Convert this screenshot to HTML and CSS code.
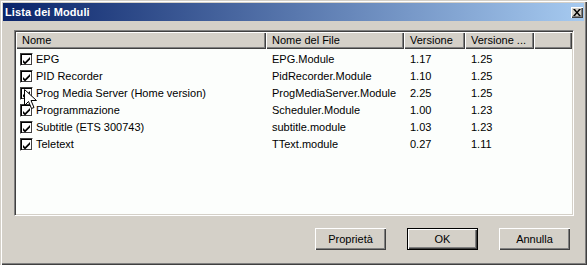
FILE: index.html
```html
<!doctype html>
<html lang="it">
	<head>
		<meta charset="UTF-8">
		<title>Lista dei Moduli</title>
		<link rel="stylesheet" href="styles.css">
	</head>
	<body>
		<div class="window">
			<div class="titlebar">
				<span class="title">Lista dei Moduli</span>
				<span class="close">
					<svg width="8" height="7" viewBox="0 0 8 7"><path d="M0 0h2l2 2.5L6 0h2L5 3.5 8 7H6L4 4.5 2 7H0l3-3.5z" fill="#000"/></svg>
				</span>
			</div>
			<div class="content">
				<div class="list">
					<div class="head">
						<div class="hcell">Nome</div>
						<div class="hcell">Nome del File</div>
						<div class="hcell">Versione</div>
						<div class="hcell">Versione ...</div>
						<div class="hcell"></div>
					</div>
					<div class="rows">
						<div class="row"><div class="cell name"><i class="chk"><svg width="9" height="9" viewBox="0 0 9 9"><path d="M1 4l2 2 5-5v2.5l-5 5-2-2z" fill="#000"/></svg></i>EPG</div><div class="cell">EPG.Module</div><div class="cell">1.17</div><div class="cell">1.25</div></div>
						<div class="row"><div class="cell name"><i class="chk"><svg width="9" height="9" viewBox="0 0 9 9"><path d="M1 4l2 2 5-5v2.5l-5 5-2-2z" fill="#000"/></svg></i>PID Recorder</div><div class="cell">PidRecorder.Module</div><div class="cell">1.10</div><div class="cell">1.25</div></div>
						<div class="row"><div class="cell name"><i class="chk"><svg width="9" height="9" viewBox="0 0 9 9"><path d="M1 4l2 2 5-5v2.5l-5 5-2-2z" fill="#000"/></svg></i>Prog Media Server (Home version)</div><div class="cell">ProgMediaServer.Module</div><div class="cell">2.25</div><div class="cell">1.25</div></div>
						<div class="row"><div class="cell name"><i class="chk"><svg width="9" height="9" viewBox="0 0 9 9"><path d="M1 4l2 2 5-5v2.5l-5 5-2-2z" fill="#000"/></svg></i>Programmazione</div><div class="cell">Scheduler.Module</div><div class="cell">1.00</div><div class="cell">1.23</div></div>
						<div class="row"><div class="cell name"><i class="chk"><svg width="9" height="9" viewBox="0 0 9 9"><path d="M1 4l2 2 5-5v2.5l-5 5-2-2z" fill="#000"/></svg></i>Subtitle (ETS 300743)</div><div class="cell">subtitle.module</div><div class="cell">1.03</div><div class="cell">1.23</div></div>
						<div class="row"><div class="cell name"><i class="chk"><svg width="9" height="9" viewBox="0 0 9 9"><path d="M1 4l2 2 5-5v2.5l-5 5-2-2z" fill="#000"/></svg></i>Teletext</div><div class="cell">TText.module</div><div class="cell">0.27</div><div class="cell">1.11</div></div>
					</div>
				</div>
				<div class="buttons">
					<button class="btn">Proprietà</button>
					<button class="btn default">OK</button>
					<button class="btn">Annulla</button>
				</div>
			</div>
			<!-- puntatore del mouse sopra la lista -->
			<svg class="cursor" width="13" height="21" viewBox="0 0 13 21"><path d="M0.5 0.5v16l4-4 3 7 2.5-1-3-7h5.5z" fill="#fff" stroke="#000" stroke-width="1"/></svg>
		</div>
	</body>
</html>
```

FILE: styles.css
```css
body{margin:0; background:#d4d0c8; font-family:"Liberation Sans", Arial, sans-serif; font-size:11px; color:#000;}
.window{position:relative; width:587px; height:265px; box-sizing:border-box; padding:3px; background:#d4d0c8;
	box-shadow:inset 1px 1px 0 #d4d0c8, inset 2px 2px 0 #fff, inset -1px -1px 0 #404040, inset -2px -2px 0 #808080;}
.titlebar{height:18px; display:flex; align-items:center; justify-content:space-between; padding:0 1px 0 2px;
	background:linear-gradient(to right, #0a246a, #a6caf0);}
.title{color:#fff; font-weight:bold; font-size:11px; letter-spacing:0.1px;}
.close{width:12px; height:11px; box-sizing:border-box; display:flex; align-items:center; justify-content:center; background:#d4d0c8;
	box-shadow:inset 1px 1px 0 #fff, inset -1px -1px 0 #404040, inset -2px -2px 0 #808080;}
.content{padding:9px 10px 0 11px;}
.list{height:186px; box-sizing:border-box; background:#fcfefc; border:1px solid; border-color:#808080 #fff #fff #808080;
	box-shadow:inset 1px 1px 0 #404040, inset -1px -1px 0 #d4d0c8; padding:1px;}
.head,.row{display:grid; grid-template-columns:250px 138px 61px 69px 1fr;}
.hcell{height:17px; box-sizing:border-box; padding:1px 0 0 6px; line-height:14px; background:#d4d0c8; white-space:nowrap;
	box-shadow:inset 1px 1px 0 #fff, inset -1px -1px 0 #404040, inset -2px -2px 0 #808080;}
.rows{padding-top:2px;}
.row{height:17px; line-height:17px;}
.cell{padding-left:6px; white-space:nowrap; overflow:hidden;}
.cell.name{display:flex; align-items:center; padding-left:4px;}
.chk{display:flex; align-items:center; justify-content:center; width:13px; height:13px; box-sizing:border-box; margin-right:3px; background:#fff;
	border:1px solid; border-color:#404040 #fff #fff #404040; box-shadow:inset 1px 1px 0 #000, inset -1px -1px 0 #404040;}
.chk svg{margin:1px 0 0 0;}
.buttons{display:flex; justify-content:flex-end; gap:21px; padding:12px 4px 0 0;}
.btn{width:71px; height:22px; padding:0; font-family:inherit; font-size:11px; color:#000; background:#d4d0c8; border:none;
	box-shadow:inset 1px 1px 0 #fff, inset -1px -1px 0 #404040, inset -2px -2px 0 #808080;}
.btn.default{border:1px solid #000; box-shadow:inset 1px 1px 0 #fff, inset -1px -1px 0 #404040, inset -2px -2px 0 #808080;}
.cursor{position:absolute; left:24px; top:89px;}
```
